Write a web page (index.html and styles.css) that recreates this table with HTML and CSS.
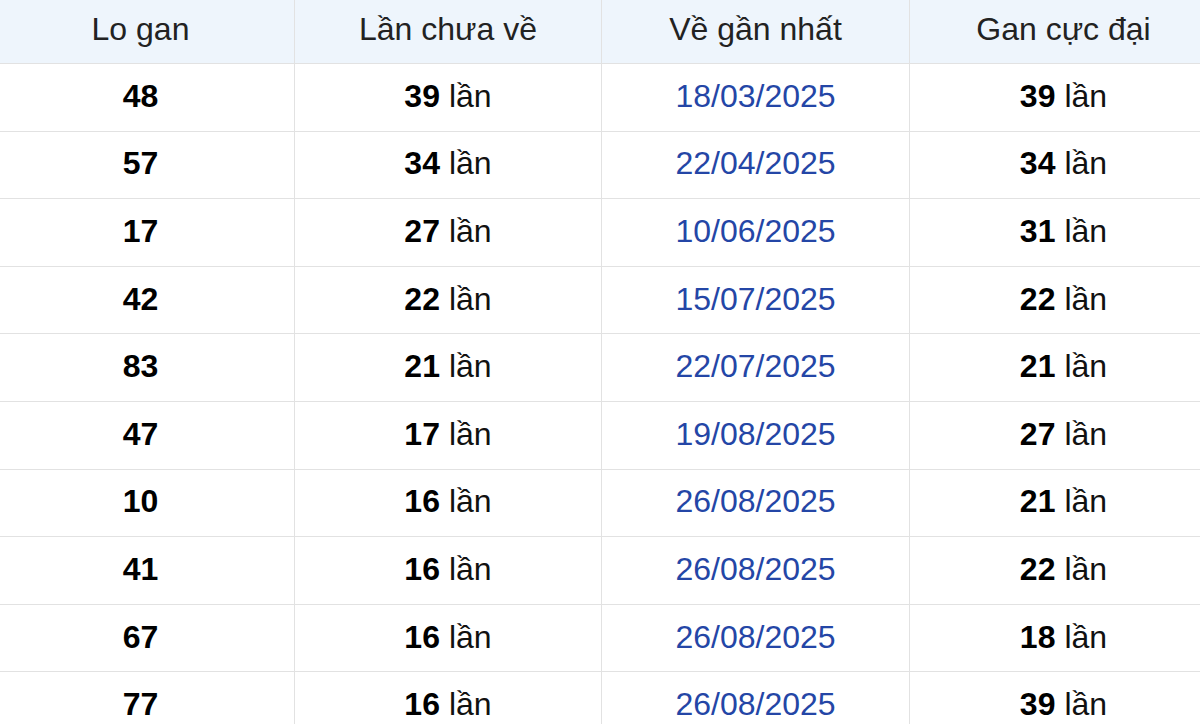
FILE: index.html
```html
<!DOCTYPE html>
<html lang="vi">
<head>
<meta charset="utf-8">
<title>Lo gan</title>
<link rel="stylesheet" href="styles.css">
</head>
<body>
<div class="table">
  <div class="cell head">Lo gan</div>
  <div class="cell head">Lần chưa về</div>
  <div class="cell head">Về gần nhất</div>
  <div class="cell head">Gan cực đại</div>

  <div class="cell num">48</div><div class="cell"><b>39</b> lần</div><div class="cell date">18/03/2025</div><div class="cell"><b>39</b> lần</div>
  <div class="cell num">57</div><div class="cell"><b>34</b> lần</div><div class="cell date">22/04/2025</div><div class="cell"><b>34</b> lần</div>
  <div class="cell num">17</div><div class="cell"><b>27</b> lần</div><div class="cell date">10/06/2025</div><div class="cell"><b>31</b> lần</div>
  <div class="cell num">42</div><div class="cell"><b>22</b> lần</div><div class="cell date">15/07/2025</div><div class="cell"><b>22</b> lần</div>
  <div class="cell num">83</div><div class="cell"><b>21</b> lần</div><div class="cell date">22/07/2025</div><div class="cell"><b>21</b> lần</div>
  <div class="cell num">47</div><div class="cell"><b>17</b> lần</div><div class="cell date">19/08/2025</div><div class="cell"><b>27</b> lần</div>
  <div class="cell num">10</div><div class="cell"><b>16</b> lần</div><div class="cell date">26/08/2025</div><div class="cell"><b>21</b> lần</div>
  <div class="cell num">41</div><div class="cell"><b>16</b> lần</div><div class="cell date">26/08/2025</div><div class="cell"><b>22</b> lần</div>
  <div class="cell num">67</div><div class="cell"><b>16</b> lần</div><div class="cell date">26/08/2025</div><div class="cell"><b>18</b> lần</div>
  <div class="cell num">77</div><div class="cell"><b>16</b> lần</div><div class="cell date">26/08/2025</div><div class="cell"><b>39</b> lần</div>
</div>
</body>
</html>
```
FILE: styles.css
```css
html, body {
  margin: 0;
  padding: 0;
  background: #fff;
}
body {
  font-family: "Liberation Sans", Arial, sans-serif;
  color: #111;
  overflow: hidden;
}
.table {
  display: grid;
  grid-template-columns: 308px 307px 308px 307px;
  grid-template-rows: 64px;
  grid-auto-rows: 67.6px;
  width: 1230px;
  margin-left: -13px;
}
.cell {
  box-sizing: border-box;
  display: flex;
  align-items: center;
  justify-content: center;
  font-size: 32px;
  border-bottom: 1px solid #e2e2e2;
  border-right: 1px solid #e2e2e2;
  padding-bottom: 2px;
  white-space: nowrap;
}
.cell:nth-child(4n) {
  border-right: none;
}
.head {
  background: #eef5fc;
  color: #222;
  padding-bottom: 4px;
}
.num {
  font-weight: bold;
  color: #000;
}
.cell b {
  font-weight: bold;
  color: #000;
  margin-right: 9px;
}
.date {
  color: #2446a6;
}
```
